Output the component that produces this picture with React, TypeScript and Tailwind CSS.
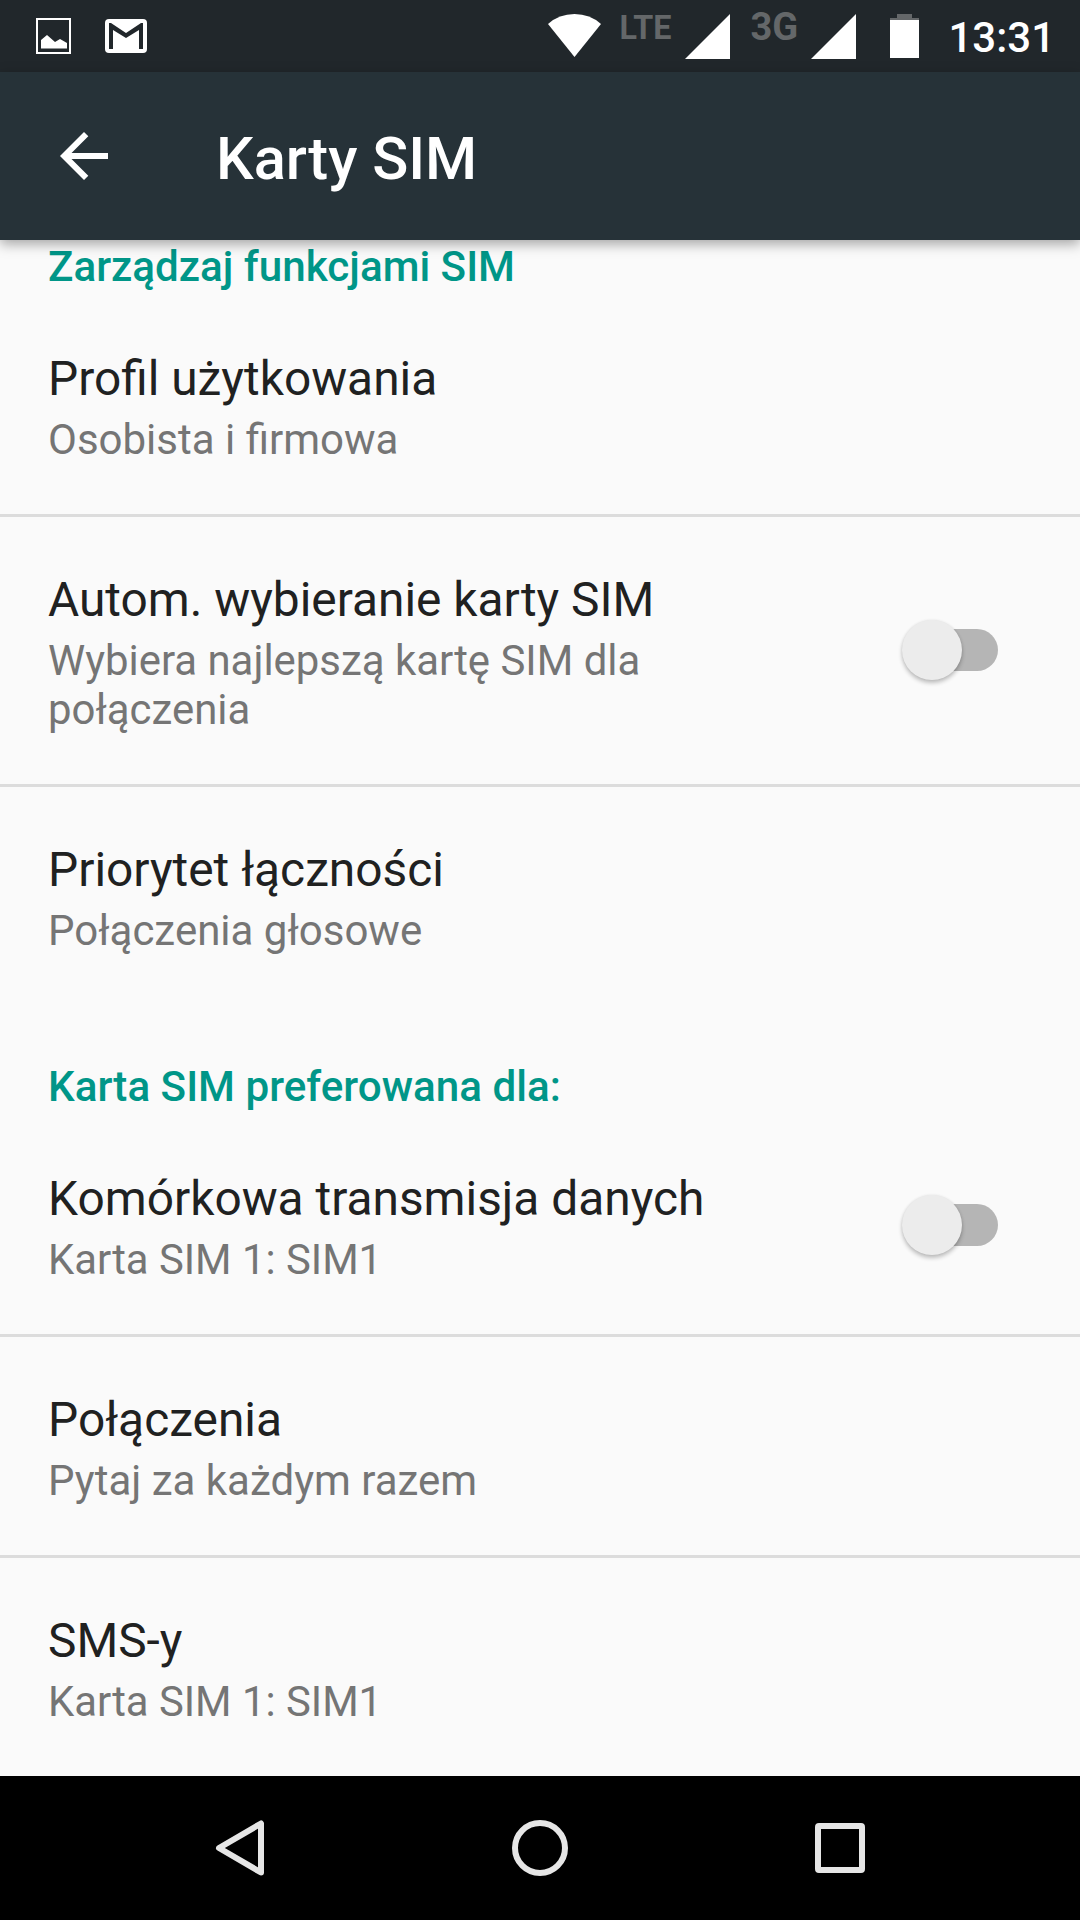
import React from 'react';

function Toggle() {
  return (
    <div className="relative mr-[82px] mb-0.5 h-[42px] w-24 shrink-0">
      <div className="ml-8 h-[42px] w-16 rounded-full bg-[#b5b5b5]" />
      <div className="absolute top-0 left-0 -mt-[9px] size-[60px] rounded-full bg-[#ececec] shadow-[0_3px_4px_rgba(0,0,0,0.24),0_0_3px_rgba(0,0,0,0.08)]" />
    </div>
  );
}

type RowProps = {
  title: string;
  summary: string;
  summarySize?: string;
  toggle?: boolean;
  divider?: boolean;
};

function Row({ title, summary, summarySize = 'text-[42px]', toggle, divider }: RowProps) {
  return (
    <div className={divider ? 'border-b-[3px] border-[#dcdcdc]' : ''}>
      <div className="flex items-center justify-between pt-[51px] pb-[50px] pl-12">
        <div className="max-w-[700px]">
          <div className="text-[47.85px] leading-[64px] text-[#202121]">{title}</div>
          <div className={`mt-1 leading-[49px] text-[#757575] ${summarySize}`}>{summary}</div>
        </div>
        {toggle && <Toggle />}
      </div>
    </div>
  );
}

function Category({ children }: { children: React.ReactNode }) {
  return <div className="pl-12 text-[42.2px] leading-[49px] font-medium text-[#009688]">{children}</div>;
}

function StatusBar() {
  return (
    <div className="flex h-[72px] shrink-0 items-start bg-[#21272b]">
      <svg className="mt-[18px] ml-9 h-9 w-[35px] shrink-0" viewBox="0 0 35 36">
        <rect x="1" y="1" width="33" height="34" fill="none" stroke="#fff" strokeWidth="2" />
        <path d="M5 30.500V22l6-5 8 7 5-3 7 4v5.500z" fill="#fff" />
      </svg>
      <svg className="mt-[19px] ml-[34px] h-[34px] w-[42px] shrink-0" viewBox="0 0 42 34">
        <rect width="42" height="34" rx="4" fill="#fff" />
        <path d="M4 30V4h2L21 14 36 4h2v26h-4V11L21 19 8 11v19z" fill="#21272b" />
      </svg>
      <div className="flex-1" />
      <svg className="mt-3.5 h-[43px] w-[53px] shrink-0" viewBox="0 0 53 43">
        <path d="M26.500 43L0 10Q11 0 26.500 0T53 10z" fill="#fff" />
      </svg>
      <div className="mt-2.5 ml-[18px] w-[58px] text-[32.3px] leading-9 font-bold text-[#646769]">LTE</div>
      <svg className="mt-3.5 ml-2 h-[45px] w-[45px] shrink-0" viewBox="0 0 45 45">
        <path d="M45 0v45H0z" fill="#fff" />
      </svg>
      <div className="mt-2 ml-5 w-[50px] text-[38px] leading-[38px] font-bold text-[#646769]">3G</div>
      <svg className="mt-3.5 ml-[11px] h-[45px] w-[45px] shrink-0" viewBox="0 0 45 45">
        <path d="M45 0v45H0z" fill="#fff" />
      </svg>
      <svg className="mt-3.5 ml-[34px] h-11 w-[29px] shrink-0" viewBox="0 0 29 44">
        <path d="M7 0h15v4h7v3H0V4h7z" fill="#646769" />
        <path d="M0 6h29v38H0z" fill="#fff" />
      </svg>
      <div className="mt-[13px] mr-[25px] ml-[29px] text-[42px] leading-[49px] font-medium text-white">13:31</div>
    </div>
  );
}

export default function App() {
  return (
    <div className="flex h-[1920px] w-[1080px] flex-col overflow-hidden bg-[#fafafa] font-['Roboto',sans-serif]">
      <StatusBar />
      <header className="relative flex h-[168px] shrink-0 items-center bg-[#263238] shadow-[0_4px_12px_rgba(0,0,0,0.35)]">
        <svg className="ml-[60px] size-12 shrink-0" viewBox="0 0 48 48">
          <path d="M48 21v6H11.500l16.800 16.800L24 48 0 24 24 0l4.300 4.200L11.500 21z" fill="#fff" />
        </svg>
        <h1 className="mt-[5px] ml-[108px] text-[59.6px] leading-[70px] font-medium text-white">Karty SIM</h1>
      </header>
      <main className="min-h-0 flex-1">
        <div className="pt-[2px] pb-[5px]">
          <Category>Zarządzaj funkcjami SIM</Category>
        </div>
        <Row title="Profil użytkowania" summary="Osobista i firmowa" divider />
        <Row
          title="Autom. wybieranie karty SIM"
          summary="Wybiera najlepszą kartę SIM dla połączenia"
          summarySize="text-[41.9px]"
          toggle
          divider
        />
        <Row title="Priorytet łączności" summary="Połączenia głosowe" />
        <div className="pt-[57px] pb-[5px]">
          <Category>Karta SIM preferowana dla:</Category>
        </div>
        <Row
          title="Komórkowa transmisja danych"
          summary="Karta SIM 1: SIM1"
          summarySize="text-[41.8px]"
          toggle
          divider
        />
        <Row title="Połączenia" summary="Pytaj za każdym razem" divider />
        <Row title="SMS-y" summary="Karta SIM 1: SIM1" summarySize="text-[41.8px]" />
      </main>
      <nav className="flex h-36 shrink-0 items-center bg-black">
        <svg
          className="ml-[215px] h-14 w-[50px]"
          viewBox="0 0 50 56"
          fill="none"
          stroke="#e6e6e6"
          strokeWidth="6"
          strokeLinejoin="round"
        >
          <path d="M46 3.500v49L4 28z" />
        </svg>
        <svg className="ml-[247px] size-14" viewBox="0 0 56 56" fill="none" stroke="#e6e6e6" strokeWidth="6">
          <circle cx="28" cy="28" r="25" />
        </svg>
        <svg className="ml-[247px] size-[50px]" viewBox="0 0 50 50" fill="none" stroke="#e6e6e6" strokeWidth="6">
          <rect x="3" y="3" width="44" height="44" rx="1" />
        </svg>
      </nav>
    </div>
  );
}
